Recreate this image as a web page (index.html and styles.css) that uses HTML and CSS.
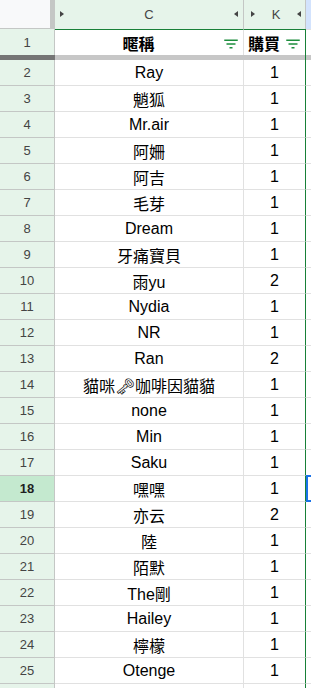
FILE: index.html
```html
<!DOCTYPE html>
<html lang="zh-Hant">
<head>
  <meta charset="UTF-8">
  <meta name="viewport" content="width=device-width, initial-scale=1.0">
  <title>購買名單</title>
  <link rel="stylesheet" href="styles.css">
</head>
<body>
  <div class="sheet">
    <div class="row col-head">
      <div class="corner"></div>
      <div class="letter c">
        <span class="arrow right"></span>C<span class="arrow left"></span>
      </div>
      <div class="letter k">
        <span class="arrow right"></span>K<span class="arrow left"></span>
      </div>
      <div class="letter next"></div>
    </div>

    <div class="row head-row">
      <div class="num">1</div>
      <div class="cell title">
        <span>暱稱</span>
        <svg class="filter" viewBox="0 0 24 24"><path d="M10 18h4v-2h-4v2zM3 6v2h18V6H3zm3 7h12v-2H6v2z"/></svg>
      </div>
      <div class="cell title k">
        <span>購買</span>
        <svg class="filter" viewBox="0 0 24 24"><path d="M10 18h4v-2h-4v2zM3 6v2h18V6H3zm3 7h12v-2H6v2z"/></svg>
      </div>
      <div class="cell blank"></div>
    </div>

    <div class="row freeze">
      <div class="bar-dark"></div>
      <div class="bar"></div>
      <div class="bar k"></div>
      <div class="bar"></div>
    </div>

    <div id="rows"></div>
  </div>

  <script>
    const buyers = [
      ["Ray", 1], ["魈狐", 1], ["Mr.air", 1], ["阿姍", 1], ["阿吉", 1],
      ["毛芽", 1], ["Dream", 1], ["牙痛寶貝", 1], ["雨yu", 2], ["Nydia", 1],
      ["NR", 1], ["Ran", 2], ["貓咪🗝咖啡因貓貓", 1], ["none", 1], ["Min", 1],
      ["Saku", 1], ["嘿嘿", 1], ["亦云", 2], ["陸", 1], ["陌默", 1],
      ["The剛", 1], ["Hailey", 1], ["檸檬", 1], ["Otenge", 1]
    ];

    let html = '';
    buyers.forEach((b, i) => {
      let n = i + 2;
      let active = n === 18;
      html += `<div class="row${active ? ' active' : ''}">
                 <div class="num">${n}</div>
                 <div class="cell">${b[0]}</div>
                 <div class="cell k">${b[1]}</div>
                 <div class="cell blank">${active ? '<span class="cursor"></span>' : ''}</div>
               </div>`;
    });
    // next row only peeks in at the bottom edge
    html += `<div class="row">
               <div class="num"></div>
               <div class="cell"></div>
               <div class="cell k"></div>
               <div class="cell blank"></div>
             </div>`;
    document.getElementById("rows").innerHTML = html;
  </script>
</body>
</html>
```

FILE: styles.css
```css
body {
  margin: 0;
  padding: 0;
  background-color: #fff;
  font-family: "Liberation Sans", Arial, "Noto Sans CJK TC", sans-serif;
  overflow: hidden;
}
.sheet {
  width: 311px;
}
.row {
  display: grid;
  grid-template-columns: 55px 189px 62px 5px;
  height: 26px;
}

/* column letters */
.col-head {
  height: 29px;
}
.corner {
  background-color: #f8f9fa;
  border-right: 5px solid #c4c7c5;
  border-bottom: 1px solid #c4c7c5;
}
.letter {
  display: flex;
  justify-content: space-between;
  align-items: center;
  background-color: #e6f4ea;
  border-right: 1px solid #c4c7c5;
  color: #444;
  font-size: 13px;
  padding: 0 5px 1px;
}
.letter.k {
  padding: 0 4px 1px 7px;
}
.letter.next {
  background-color: #d3e3fd;
  border-right: none;
  padding: 0;
}
.arrow {
  width: 0;
  height: 0;
  border-top: 3px solid transparent;
  border-bottom: 3px solid transparent;
}
.arrow.right {
  border-left: 4px solid #444;
}
.arrow.left {
  border-right: 4px solid #444;
}

/* cells */
.num {
  display: flex;
  justify-content: center;
  align-items: center;
  background-color: #e6f4ea;
  border-right: 1px solid #c4c7c5;
  border-bottom: 1px solid #c4c7c5;
  color: #444;
  font-size: 13px;
}
.cell {
  display: flex;
  justify-content: center;
  align-items: center;
  border-right: 1px solid #e1e1e1;
  border-bottom: 1px solid #e1e1e1;
  color: #000;
  font-size: 16px;
  white-space: nowrap;
  overflow: hidden;
}
.cell.k {
  border-right: 1px solid #188038;
}
.cell.blank {
  border-right: none;
  position: relative;
  overflow: visible;
}
.row > * {
  box-sizing: border-box;
}

/* header row with filters */
.head-row .num {
  border-bottom: none;
}
.head-row .cell {
  border-bottom: none;
  border-top: 1px solid #188038;
}
.head-row .cell.blank {
  border-top: 1px solid #e1e1e1;
}
.title {
  font-weight: bold;
  padding-right: 3px;
}
.title span {
  flex: 1;
  text-align: center;
}
.filter {
  width: 18px;
  height: 18px;
  fill: #1e8e3e;
  margin-top: 2px;
}

/* freeze line */
.freeze {
  height: 5px;
}
.bar-dark {
  background-color: #757575;
}
.bar {
  background-color: #c7c7c7;
}
.bar.k {
  border-right: 1px solid #188038;
}

/* active row */
.active .num {
  background-color: #c4e9cf;
  color: #1f1f1f;
  font-weight: bold;
}
.cursor {
  position: absolute;
  top: -1px;
  left: 0;
  right: -4px;
  bottom: -1px;
  border: 2px solid #1a73e8;
}
```
